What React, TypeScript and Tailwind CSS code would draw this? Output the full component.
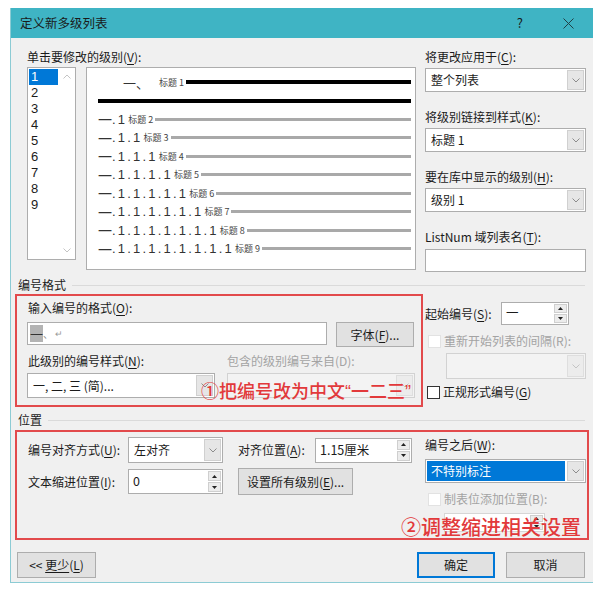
import clsx from "clsx";
import type { ReactNode } from "react";

/* Word "定义新多级列表" dialog with two red annotation boxes */

function K({ c }: { c: string }) {
  return <span className="underline underline-offset-[2px]">{c}</span>;
}

function Chevron({ dim }: { dim?: boolean }) {
  return (
    <svg width="8" height="5" viewBox="0 0 8 5" fill="none">
      <path d="M0.5 0.5 L4 4 L7.5 0.5" stroke={dim ? "#c4c4c4" : "#8c8c8c"} strokeWidth="1" />
    </svg>
  );
}

function Tri({ up }: { up?: boolean }) {
  return (
    <svg width="5" height="3" viewBox="0 0 5 3">
      <path d={up ? "M0 3 L2.5 0 L5 3 Z" : "M0 0 L2.5 3 L5 0 Z"} fill="#222" />
    </svg>
  );
}

function Combo({
  children,
  className,
  disabled,
  selected,
}: {
  children?: ReactNode;
  className?: string;
  disabled?: boolean;
  selected?: boolean;
}) {
  return (
    <div
      className={clsx(
        "flex border",
        disabled ? "border-[#d2d2d2] bg-[#f3f3f3]" : "border-[#adadad] bg-white",
        className
      )}
    >
      <div className="flex flex-1 items-center p-[1px]">
        <div
          className={clsx(
            "flex h-full w-full items-center pl-[4px] text-[12px]",
            selected ? "bg-[#0078d7] text-white" : "text-[#1b1b1b]"
          )}
        >
          {children}
        </div>
      </div>
      <div
        className={clsx(
          "m-[1px] flex w-[17px] items-center justify-center border",
          disabled ? "border-[#dedede] bg-[#ececec]" : "border-[#d0d0d0] bg-[#e6e6e6]"
        )}
      >
        <Chevron dim={disabled} />
      </div>
    </div>
  );
}

function Spin({
  children,
  className,
  disabled,
}: {
  children?: ReactNode;
  className?: string;
  disabled?: boolean;
}) {
  return (
    <div
      className={clsx(
        "flex border bg-white",
        disabled ? "border-[#d6d6d6]" : "border-[#adadad]",
        className
      )}
    >
      <div className="flex flex-1 items-center pl-[4px] text-[12.5px] text-[#1b1b1b]">{children}</div>
      <div className="my-[1px] mr-[1px] flex w-[13px] flex-col gap-[1px]">
        <div className="flex flex-1 items-center justify-center border border-[#cfcfcf] bg-[#ececec]">
          <Tri up />
        </div>
        <div className="flex flex-1 items-center justify-center border border-[#cfcfcf] bg-[#ececec]">
          <Tri />
        </div>
      </div>
    </div>
  );
}

function Btn({ children, className, primary }: { children: ReactNode; className?: string; primary?: boolean }) {
  return (
    <div
      className={clsx(
        "flex items-center justify-center bg-[#e1e1e1] text-[12px] text-[#1b1b1b]",
        primary ? "border-2 border-[#0078d7]" : "border border-[#adadad]",
        className
      )}
    >
      {children}
    </div>
  );
}

function Check({ disabled, children }: { disabled?: boolean; children: ReactNode }) {
  return (
    <div className="flex h-[16px] items-center">
      <span
        className={clsx(
          "h-[13px] w-[13px] border bg-white",
          disabled ? "border-[#e2e2e2]" : "border-[#333333]"
        )}
      />
      <span className={clsx("ml-[3px] text-[12px]", disabled ? "text-[#a3a3a3]" : "text-[#1b1b1b]")}>
        {children}
      </span>
    </div>
  );
}

function Section({ title }: { title: string }) {
  return (
    <div className="ml-[3px] flex h-[16px] items-center">
      <span className="text-[12px] leading-[16px] text-[#1b1b1b]">{title}</span>
      <span className="ml-[6px] mr-[4px] h-px flex-1 bg-[#dadada]" />
    </div>
  );
}

const levels = [2, 3, 4, 5, 6, 7, 8, 9];

function Preview() {
  return (
    <div className="h-[203px] w-[330px] border border-[#adadad] bg-white pt-[5px]">
      <div className="flex h-[18px] items-center pl-[36px] pr-[4px]">
        <span className="text-[13px] leading-none text-[#333]">一、</span>
        <span className="ml-[10px] text-[9px] leading-none text-[#444]">标题 1</span>
        <span className="ml-[2px] h-[4px] flex-1 bg-black" />
      </div>
      <div className="flex h-[19px] items-center pl-[11px] pr-[4px]">
        <span className="h-[4px] flex-1 bg-black" />
      </div>
      {levels.map((n) => (
        <div key={n} className="flex h-[18.5px] items-center pl-[11px] pr-[4px]">
          <span className="text-[14px] leading-none text-[#333]">一</span>
          <span className="font-['Liberation_Sans',sans-serif] text-[13px] leading-none tracking-[2.2px] text-[#333]">
            {".1".repeat(n - 1)}
          </span>
          <span className="ml-[1px] text-[9px] leading-none text-[#444]">标题 {n}</span>
          <span className="ml-[2px] h-[3px] flex-1 bg-[#a9a9a9]" />
        </div>
      ))}
    </div>
  );
}

function LevelList() {
  return (
    <div className="flex h-[193px] w-[49px] border border-[#adadad] bg-white">
      <div className="w-[30px] pl-[1px] pt-[1px] font-['Liberation_Sans',sans-serif]">
        {[1, 2, 3, 4, 5, 6, 7, 8, 9].map((n) => (
          <div
            key={n}
            className={clsx(
              "flex h-[16px] items-center pl-[2px] text-[13px] leading-[14px]",
              n === 1 ? "bg-[#0078d7] text-white" : "text-[#1b1b1b]"
            )}
          >
            {n}
          </div>
        ))}
      </div>
      <div className="flex flex-1 flex-col items-center justify-between py-[6px]">
        <svg width="8" height="5" viewBox="0 0 8 5" fill="none">
          <path d="M0.5 4.5 L4 1 L7.5 4.5" stroke="#c4c4c4" strokeWidth="1" />
        </svg>
        <Chevron dim />
      </div>
    </div>
  );
}

function Label({ children, className }: { children: ReactNode; className?: string }) {
  return <div className={clsx("h-[16px] text-[12px] leading-[16px] text-[#1b1b1b]", className)}>{children}</div>;
}

function Note({ children, className }: { children: ReactNode; className?: string }) {
  return (
    <div
      className={clsx(
        "absolute whitespace-nowrap font-medium leading-[24px] text-[#e2393b]",
        className
      )}
    >
      {children}
    </div>
  );
}

export default function App() {
  return (
    <div className="h-[594px] w-[593px] overflow-hidden bg-white pt-[8px] pl-[10px] font-['Noto_Sans_CJK_SC',sans-serif]">
      <div className="flex h-[575px] w-[583px] flex-col border-b border-l border-[#8ccbd4]">
        <div className="flex h-[30px] items-center bg-[#3fb4c4] pl-[9px] text-[12.5px] text-[#1a1a1a]">
          <span>定义新多级列表</span>
          <span className="ml-auto mr-[40px] text-[13px]">?</span>
          <svg width="11" height="11" viewBox="0 0 11 11" className="mr-[19px]">
            <path d="M0.5 0.5 L10.5 10.5 M10.5 0.5 L0.5 10.5" stroke="#1f3f45" strokeWidth="1" />
          </svg>
        </div>

        <div className="flex-1 bg-[#f0f0f0] px-[4px]">
          {/* top: levels, preview, right column */}
          <div className="ml-[12px] flex pt-[11px]">
            <div className="w-[398px]">
              <Label>
                单击要修改的级别(<K c="V" />):
              </Label>
              <div className="mt-[2px] flex gap-[10px]">
                <LevelList />
                <Preview />
              </div>
            </div>
            <div className="w-[161px]">
              <Label>
                将更改应用于(<K c="C" />):
              </Label>
              <Combo className="mt-[3px] h-[24px]">整个列表</Combo>
              <Label className="mt-[17px]">
                将级别链接到样式(<K c="K" />):
              </Label>
              <Combo className="mt-[3px] h-[24px]">标题 1</Combo>
              <Label className="mt-[17px]">
                要在库中显示的级别(<K c="H" />):
              </Label>
              <Combo className="mt-[3px] h-[24px]">级别 1</Combo>
              <Label className="mt-[17px]">
                ListNum 域列表名(<K c="T" />):
              </Label>
              <div className="mt-[4px] h-[23px] border border-[#adadad] bg-white" />
            </div>
          </div>

          <div className="mt-[5px]">
            <Section title="编号格式" />
          </div>

          <div className="mt-[1px] flex">
            <div className="relative h-[113px] w-[408px] border-2 border-[#e24a4c] pt-[4px]">
              <Label className="ml-[11px]">
                输入编号的格式(<K c="O" />):
              </Label>
              <div className="ml-[10px] mt-[6px] flex items-start gap-[9px]">
                <div className="flex h-[23px] w-[300px] items-center border border-[#adadad] bg-white pl-[2px]">
                  <span className="bg-[#b3b3b3] text-[13px] leading-[17px] text-[#333]">一</span>
                  <span className="text-[10px] text-[#888]">、</span>
                  <span className="ml-[2px] text-[9px] text-[#999]">↵</span>
                </div>
                <Btn className="h-[25px] w-[78px]">
                  字体(<K c="F" />)...
                </Btn>
              </div>
              <div className="ml-[10px] mt-[6px] grid grid-cols-[188px_188px] gap-x-[12px]">
                <Label className="ml-[1px]">
                  此级别的编号样式(<K c="N" />):
                </Label>
                <Label className="text-[#a3a3a3]">包含的级别编号来自(D):</Label>
                <Combo className="mt-[4px] h-[25px]">一, 二, 三 (简)...</Combo>
                <Combo disabled className="mt-[4px] h-[25px]" />
              </div>
              <Note className="left-[184px] top-[82px] text-[18px]">
                ①把编号改为中文
                <span className="font-['Liberation_Sans',sans-serif]">“</span>一二三
                <span className="font-['Liberation_Sans',sans-serif]">”</span>
              </Note>
            </div>

            <div className="ml-[2px] w-[161px]">
              <div className="mt-[8px] flex h-[23px] items-center">
                <span className="w-[76px] text-[12px] text-[#1b1b1b]">
                  起始编号(<K c="S" />):
                </span>
                <Spin className="h-[23px] w-[68px]">一</Spin>
              </div>
              <div className="ml-[3px] mt-[8px]">
                <Check disabled>重新开始列表的间隔(R):</Check>
              </div>
              <Combo disabled className="ml-[21px] mt-[4px] h-[26px] w-[140px]" />
              <div className="ml-[2px] mt-[5px]">
                <Check>
                  正规形式编号(<K c="G" />)
                </Check>
              </div>
            </div>
          </div>

          <div className="mt-[5px]">
            <Section title="位置" />
          </div>

          <div className="relative mt-[2px] flex h-[110px] w-[574px] border-2 border-[#e24a4c]">
            <div className="w-[408px]">
              <div className="ml-[11px] mt-[5px] flex h-[26px] items-center">
                <span className="w-[100px] text-[12px] text-[#1b1b1b]">
                  编号对齐方式(<K c="U" />):
                </span>
                <Combo className="h-[26px] w-[95px]">左对齐</Combo>
                <span className="ml-[15px] w-[77px] text-[12px] text-[#1b1b1b]">
                  对齐位置(<K c="A" />):
                </span>
                <Spin className="h-[25px] w-[97px]">1.15厘米</Spin>
              </div>
              <div className="ml-[11px] mt-[5px] flex h-[27px] items-center">
                <span className="w-[100px] text-[12px] text-[#1b1b1b]">
                  文本缩进位置(<K c="I" />):
                </span>
                <Spin className="h-[25px] w-[95px]">0</Spin>
                <Btn className="ml-[15px] h-[27px] w-[115px]">
                  设置所有级别(<K c="E" />)...
                </Btn>
              </div>
            </div>
            <div className="w-[161px]">
              <Label className="mt-[5px]">
                编号之后(<K c="W" />):
              </Label>
              <Combo selected className="mt-[6px] h-[24px]">
                不特别标注
              </Combo>
              <div className="ml-[3px] mt-[8px]">
                <Check disabled>制表位添加位置(B):</Check>
              </div>
              <Spin disabled className="ml-[19px] mt-[6px] h-[19px] w-[101px]" />
            </div>
            <Note className="left-[384px] top-[83px] text-[20px]">②调整缩进相关设置</Note>
          </div>

          <div className="mt-[12px] flex items-center">
            <Btn className="ml-[2px] h-[26px] w-[79px]">
              <span>&lt;&lt;&nbsp;</span>
              <span className="underline underline-offset-[2px]">更少</span>(<K c="L" />)
            </Btn>
            <Btn primary className="ml-auto h-[26px] w-[78px]">
              确定
            </Btn>
            <Btn className="ml-[11px] mr-[4px] h-[26px] w-[79px]">取消</Btn>
          </div>
        </div>
      </div>
    </div>
  );
}
